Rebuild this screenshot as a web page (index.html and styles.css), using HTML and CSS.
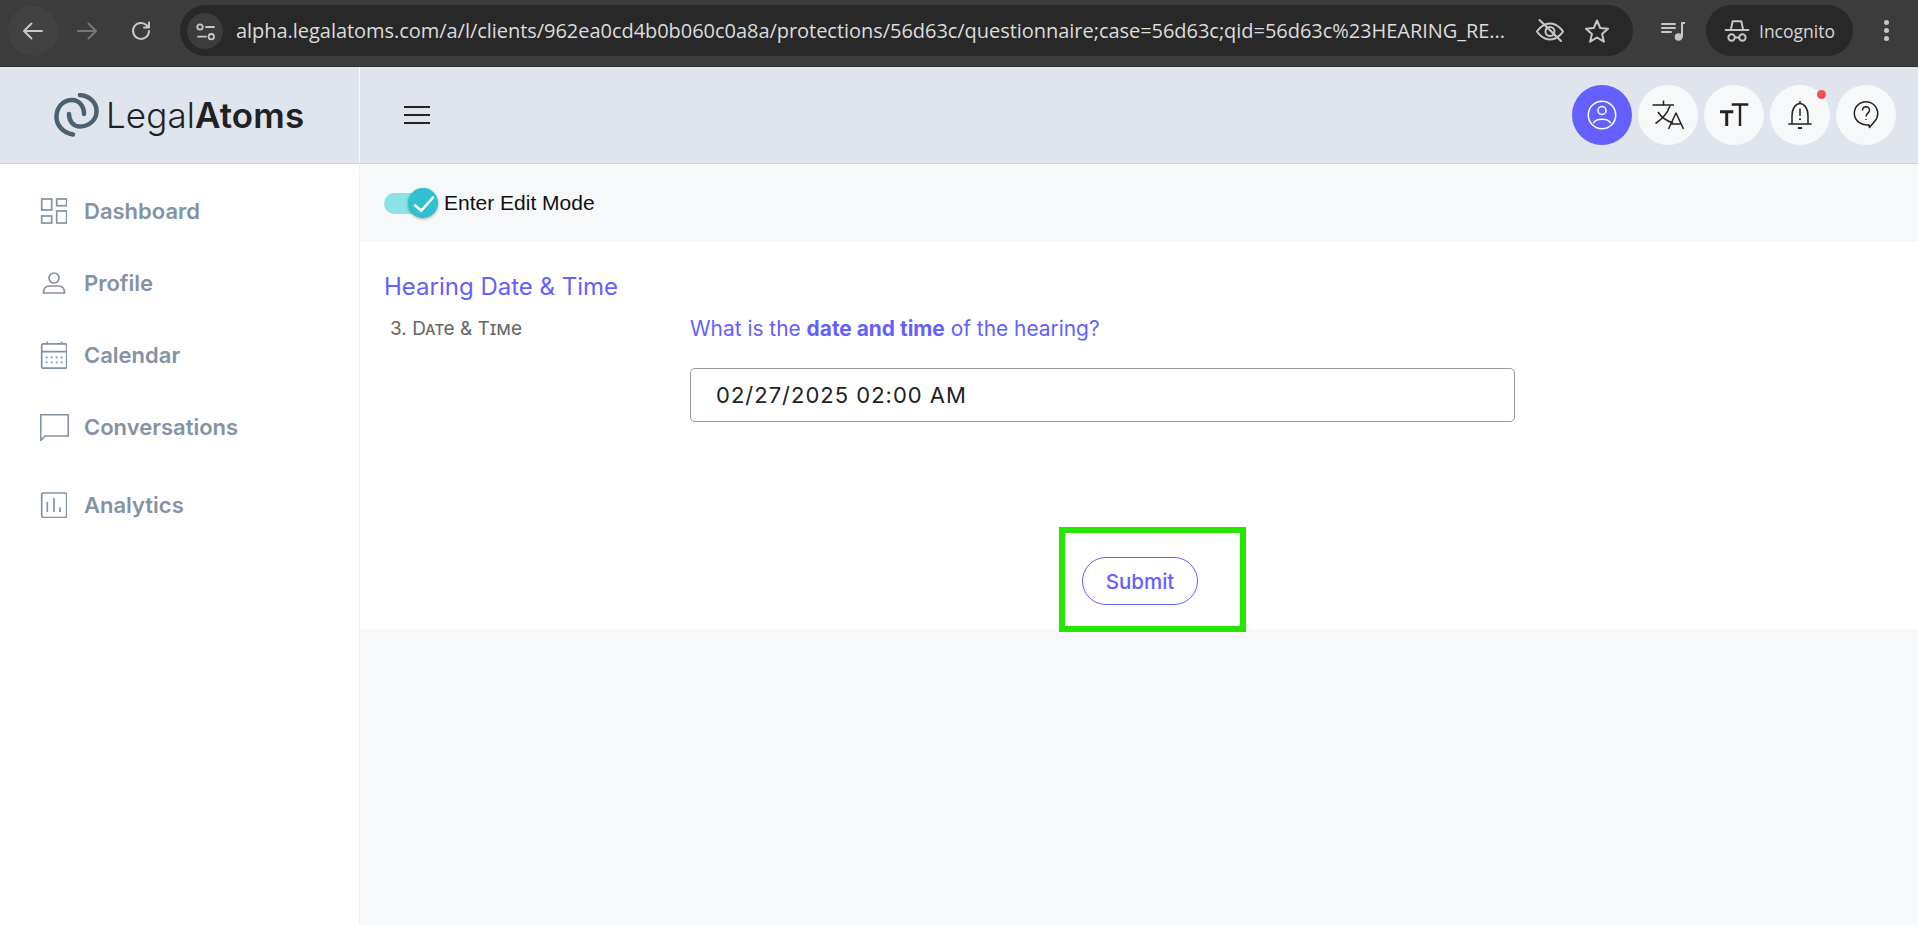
FILE: index.html
```html
<!DOCTYPE html>
<html lang="en">
<head>
<meta charset="utf-8">
<title>LegalAtoms</title>
<link rel="stylesheet" href="styles.css">
</head>
<body>
<div class="browser">
  <div class="nav-btn nav-hover">
    <svg width="24" height="24" viewBox="0 0 24 24" class="ic-light"><path d="M21 12H3.500M10.500 4.500 3 12l7.500 7.500"/></svg>
  </div>
  <div class="nav-btn">
    <svg width="24" height="24" viewBox="0 0 24 24" class="ic-dim"><path d="M3 12h17.500M13.500 4.500 21 12l-7.500 7.500"/></svg>
  </div>
  <div class="nav-btn">
    <svg width="24" height="24" viewBox="0 0 24 24" class="ic-light"><path d="M20 12a8 8 0 1 1-2.300-5.700L20 8.500M20 3.500v5h-5"/></svg>
  </div>
  <div class="omnibox">
    <div class="site-info">
      <svg width="36" height="36" viewBox="0 0 36 36" class="ic-light thin"><circle cx="13" cy="14" r="2.700"/><path d="M19 14h8M11 23.700h8"/><circle cx="24.300" cy="23.700" r="2.700"/></svg>
    </div>
    <div class="url">alpha.legalatoms.com/a/l/clients/962ea0cd4b0b060c0a8a/protections/56d63c/questionnaire;case=56d63c;qid=56d63c%23HEARING_RE...</div>
    <svg width="30" height="30" viewBox="0 0 30 30" class="ic-light omni-ic"><path d="M2 15.500S7 7.500 15 7.500 28 15.500 28 15.500 23 23.500 15 23.500 2 15.500 2 15.500z"/><circle cx="15" cy="15.500" r="4.500"/><path d="M4.500 4 26 25"/></svg>
    <svg width="30" height="30" viewBox="0 0 30 30" class="ic-light omni-ic star"><path d="M15 4.500l3.200 7.500 7.800.7-5.900 5.200 1.800 7.800-6.900-4.200-6.900 4.200 1.800-7.800-5.900-5.200 7.800-.7z"/></svg>
  </div>
  <svg width="24" height="24" viewBox="0 0 24 24" class="ic-light media"><path d="M1 5h13M1 9h13M1 13h9"/><path d="M21 4v14M21 4h2.500"/><circle cx="17.500" cy="18" r="2.800" class="solid"/></svg>
  <div class="incognito">
    <svg width="26" height="26" viewBox="0 0 24 24" class="ic-light thin"><path d="M6.500 10 8 3h8l1.500 7M1.500 11h21"/><circle cx="7" cy="18" r="3"/><circle cx="17" cy="18" r="3"/><path d="M10 18h4"/></svg>
    <span>Incognito</span>
  </div>
  <div class="dots"><i></i><i></i><i></i></div>
</div>

<header class="app-header">
  <div class="logo">
    <svg width="45" height="44" viewBox="0 0 45 44" class="logo-mark"><path d="M26 2C36 3 43 10 42.500 19 42 28 34 33.500 26 33.500 19 33.500 15 28 15 21"/><path d="M19 41.500C9 40 2 32 2.500 23 3 13 10 7 18 7 25 7 30 13 30 21"/></svg>
    <span class="logo-text">Legal<b>Atoms</b></span>
  </div>
  <div class="header-main">
    <button class="burger" aria-label="Menu"><i></i><i></i><i></i></button>
    <div class="header-icons">
      <div class="round round-active">
        <svg width="30" height="30" viewBox="0 0 30 30" class="ic-white"><circle cx="15" cy="15" r="13.700"/><circle cx="15" cy="10.500" r="4"/><path d="M6.700 22.600C9 18 21 18 23.300 22.600"/></svg>
      </div>
      <div class="round">
        <svg width="32" height="30" viewBox="0 0 32 30" class="ic-dark"><path d="M.5 5H22M11.500.5V5M18 6C15 14 9 20 3.500 23.500M6 12c3 5 9 9 15 11"/><path d="M16.500 29 24 13l7.500 16M19 24h10"/></svg>
      </div>
      <div class="round">
        <svg width="30" height="30" viewBox="0 0 30 30" class="ic-heavy"><path d="M1 11.700h13.300M7.700 11.700V26" /><path d="M12.700 4.500h16.600M21 4.500V26" class="ic-heavy-thin"/></svg>
      </div>
      <div class="round">
        <svg width="26" height="32" viewBox="0 0 26 32" class="ic-dark"><path d="M1.300 25h23.300M5 25v-8C5 9 9 4.500 13 4.500S21 9 21 17v8M13 2v2.500M13 9.500V17"/><path d="M13 19.500v1.500M11 29h4" class="ic-dark-bold"/></svg>
        <span class="dot"></span>
      </div>
      <div class="round">
        <svg width="26" height="32" viewBox="0 0 26 32" class="ic-dark"><path d="M16 25.800C9 27 1.300 22 1.300 14.300a11.700 11.700 0 1 1 20.200 8.200l-5 6z"/><path d="M9.500 11.500c0-5 7-5 7-.3 0 3-3.500 3-3.500 6.300M13 20v1"/></svg>
      </div>
    </div>
  </div>
</header>

<div class="shell">
  <nav class="sidebar">
    <a class="nav-item">
      <span class="nav-slot"><svg width="27" height="26" viewBox="0 0 27 26" class="ic-nav"><rect x="1.700" y="1" width="10" height="11"/><rect x="16.700" y="1" width="10" height="6.700"/><rect x="1.700" y="18" width="10" height="7"/><rect x="16.700" y="13" width="10" height="12"/></svg></span>
      <span>Dashboard</span>
    </a>
    <a class="nav-item">
      <span class="nav-slot"><svg width="27" height="22" viewBox="0 0 27 22" class="ic-nav"><circle cx="14" cy="6" r="5"/><path d="M3.500 21c0-4 2-7 6-7h9c4 0 6 3 6 7z"/></svg></span>
      <span>Profile</span>
    </a>
    <a class="nav-item">
      <span class="nav-slot"><svg width="27" height="28" viewBox="0 0 27 28" class="ic-nav"><rect x="1.700" y="2.800" width="25" height="24.400" rx="1.500"/><path d="M1.700 10.700h25M7.300.5v3M21.700.5v3"/><path d="M5.700 16.300h1.800M10.700 16.300h1.800M15.700 16.300h1.800M20.700 16.300h1.800M5.700 21.300h1.800M10.700 21.300h1.800M15.700 21.300h1.800M20.700 21.300h1.800" class="dots-path"/></svg></span>
      <span>Calendar</span>
    </a>
    <a class="nav-item">
      <span class="nav-slot"><svg width="29" height="27" viewBox="0 0 29 27" class="ic-nav"><path d="M.7.7h27.600V22H5L.7 26.500z"/></svg></span>
      <span>Conversations</span>
    </a>
    <a class="nav-item nav-last">
      <span class="nav-slot"><svg width="27" height="26" viewBox="0 0 27 26" class="ic-nav"><rect x="1.700" y="1" width="25" height="24.500" rx="2"/><path d="M7.300 10v10M14 6v14M20 15.500V20"/></svg></span>
      <span>Analytics</span>
    </a>
  </nav>

  <main class="content">
    <div class="toolbar">
      <div class="toggle">
        <span class="track"></span>
        <span class="thumb">
          <svg width="30" height="30" viewBox="0 0 30 30"><path d="M7 17.300l6.300 5.400L25 9.500"/></svg>
        </span>
      </div>
      <span class="toggle-label">Enter Edit Mode</span>
    </div>

    <section class="card">
      <h2 class="section-title">Hearing Date &amp; Time</h2>
      <div class="question-row">
        <div class="question-num">3. Date &amp; Time</div>
        <div class="question-body">
          <p class="prompt">What is the <b>date and time</b> of the hearing?</p>
          <div class="date-input">02/27/2025 02:00 AM</div>
        </div>
      </div>
      <div class="actions">
        <div class="highlight"></div>
        <button class="submit">Submit</button>
      </div>
    </section>
  </main>
</div>
</body>
</html>
```
FILE: styles.css
```css
* { box-sizing: border-box; }
html, body { margin: 0; height: 100%; overflow: hidden; }
body {
  display: flex;
  flex-direction: column;
  height: 925px;
  background: #f7f8fa;
  font-family: Inter, "Liberation Sans", sans-serif;
}
svg { display: block; fill: none; stroke-linecap: round; stroke-linejoin: round; }
.ic-light { stroke: #c7c7c7; stroke-width: 2; }
.ic-light.thin { stroke-width: 1.800; }
.ic-dim { stroke: #777; stroke-width: 2; }
.ic-white { stroke: #fff; stroke-width: 1.500; }
.ic-dark { stroke: #222; stroke-width: 1.500; stroke-linecap: butt; }
.ic-dark-bold { stroke-width: 2; }
.ic-heavy { stroke: #222; stroke-width: 3; stroke-linecap: butt; stroke-linejoin: miter; }
.ic-heavy-thin { stroke-width: 2.400; }
.ic-nav { stroke: #8492a6; stroke-width: 1.700; stroke-linecap: butt; stroke-linejoin: miter; }
.dots-path { stroke-width: 1.800; }
.solid { fill: #c7c7c7; }

/* browser chrome */
.browser {
  height: 67px;
  flex: none;
  display: flex;
  align-items: center;
  padding: 0 0 5px 8px;
  background: #3c3c3c;
  border-bottom: 1px solid #2c2c2c;
}
.nav-btn {
  width: 50px;
  height: 50px;
  margin-right: 4px;
  flex: none;
  border-radius: 50%;
  display: flex;
  align-items: center;
  justify-content: center;
}
.nav-hover { background: #424242; }
.omnibox {
  width: 1453px;
  height: 51px;
  margin-left: 10px;
  padding-left: 7px;
  flex: none;
  display: flex;
  align-items: center;
  background: #282828;
  border-radius: 26px;
}
.site-info {
  width: 36px;
  height: 36px;
  border-radius: 50%;
  background: #3c3c3c;
  flex: none;
}
.url {
  margin-left: 13px;
  width: 1299px;
  flex: none;
  color: #dcdcdc;
  font: 400 20px "Open Sans", sans-serif;
  letter-spacing: -0.04px;
  white-space: nowrap;
  overflow: hidden;
}
.omni-ic { flex: none; }
.omni-ic.star { margin-left: 17px; }
.media { margin-left: 28px; flex: none; }
.incognito {
  margin-left: 21px;
  width: 147px;
  height: 51px;
  flex: none;
  display: flex;
  align-items: center;
  gap: 9px;
  padding-left: 18px;
  border-radius: 26px;
  background: #282828;
  color: #d6d6d6;
  font: 400 17.500px "Open Sans", sans-serif;
}
.dots { margin-left: 31px; display: flex; flex-direction: column; gap: 3px; }
.dots i { width: 5px; height: 5px; border-radius: 50%; background: #c7c7c7; }

/* app header */
.app-header {
  height: 97px;
  flex: none;
  display: flex;
  background: #e0e5ed;
  border-bottom: 1px solid #cfd3da;
}
.logo {
  width: 360px;
  flex: none;
  display: flex;
  align-items: center;
  padding-left: 54px;
  gap: 7px;
  border-right: 1px solid #f4f6f8;
}
.logo-mark { stroke: #4a626f; stroke-width: 4.500; flex: none; }
.logo-text { font-size: 35px; color: #1f2225; letter-spacing: 0.1px; font-weight: 300; }
.logo-text b { font-weight: 600; }
.header-main {
  flex: 1;
  display: flex;
  align-items: center;
  justify-content: space-between;
  padding: 0 22px 0 44px;
}
.burger {
  width: 26px;
  height: 18px;
  padding: 0;
  border: 0;
  background: none;
  display: flex;
  flex-direction: column;
  justify-content: space-between;
}
.burger i { display: block; height: 2px; background: #222; }
.header-icons { display: flex; gap: 6px; }
.round {
  position: relative;
  width: 60px;
  height: 60px;
  border-radius: 50%;
  background: #f7f8fa;
  display: flex;
  align-items: center;
  justify-content: center;
}
.round-active { background: #6360ff; }
.dot {
  position: absolute;
  top: 5px;
  right: 4px;
  width: 9px;
  height: 9px;
  border-radius: 50%;
  background: #f25050;
}

/* shell */
.shell { flex: 1; display: flex; min-height: 0; }
.sidebar {
  width: 360px;
  flex: none;
  padding-top: 11px;
  background: #fff;
  border-right: 1px solid #f0f2f5;
  display: flex;
  flex-direction: column;
}
.nav-item {
  height: 72px;
  padding-left: 40px;
  display: flex;
  align-items: center;
  color: #8492a6;
  font-size: 22px;
  font-weight: 600;
}
.nav-slot { width: 44px; flex: none; }
.nav-last { margin-top: 6px; }

.content { flex: 1; min-width: 0; }
.toolbar {
  height: 78px;
  padding-left: 24px;
  display: flex;
  align-items: center;
}
.toggle {
  position: relative;
  width: 54px;
  height: 30px;
  flex: none;
}
.track {
  position: absolute;
  left: 0;
  top: 5px;
  width: 42px;
  height: 21px;
  border-radius: 11px;
  background: #8ae3e6;
}
.thumb {
  position: absolute;
  left: 24px;
  top: 0;
  width: 30px;
  height: 30px;
  border-radius: 50%;
  background: #2fc1d0;
  box-shadow: 0 1px 3px rgba(0,0,0,.35);
}
.thumb svg { stroke: #fff; stroke-width: 2.600; }
.toggle-label {
  margin-left: 6px;
  color: #111;
  font: 400 21px "Liberation Sans", sans-serif;
}
.card {
  height: 387px;
  padding: 28px 24px 0;
  background: #fff;
}
.section-title {
  margin: 0;
  color: #6360ff;
  font-size: 24px;
  font-weight: 400;
  line-height: 33px;
}
.question-row { display: flex; margin-top: 14px; }
.question-num {
  width: 306px;
  padding-left: 6px;
  flex: none;
  color: #666;
  font-size: 19px;
  font-variant: small-caps;
  line-height: 24px;
}
.prompt {
  margin: 0;
  color: #6360ff;
  font-size: 20.900px;
  line-height: 24px;
}
.date-input {
  width: 825px;
  height: 54px;
  margin-top: 27px;
  padding-left: 25px;
  display: flex;
  align-items: center;
  border: 1px solid #9a9a9a;
  border-radius: 5px;
  color: #222;
  font-size: 22px;
  letter-spacing: 1px;
}
.actions {
  position: relative;
  margin-top: 135px;
  padding-left: 698px;
}
.submit {
  width: 116px;
  height: 48px;
  padding: 0;
  background: #fff;
  border: 1px solid #6360ff;
  border-radius: 24px;
  color: #6360ff;
  font: 500 20.500px Inter, sans-serif;
}
.highlight {
  position: absolute;
  left: 675px;
  top: -30px;
  width: 187px;
  height: 105px;
  border: 6px solid #27e600;
}
```
